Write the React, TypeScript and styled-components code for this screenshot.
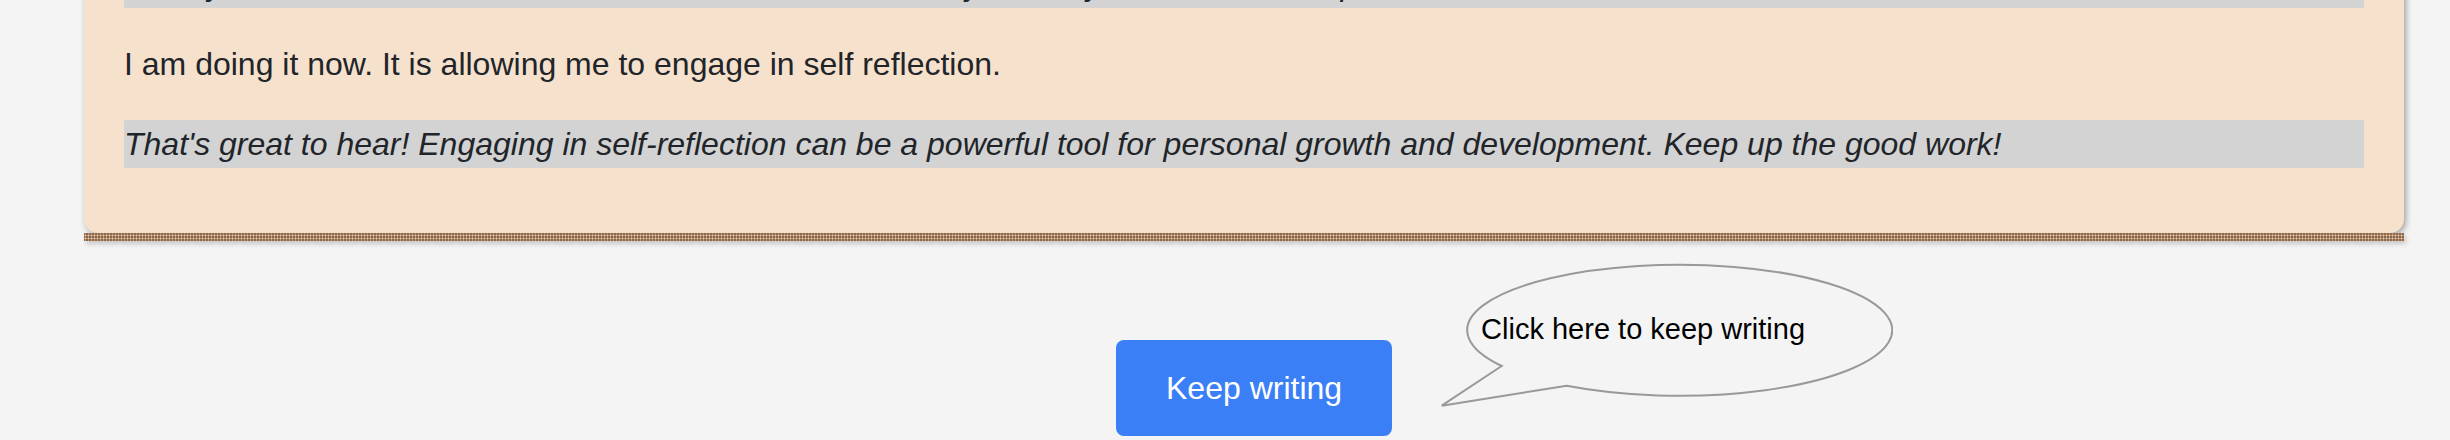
import React from "react";
import styled, { createGlobalStyle } from "styled-components";

const GlobalStyle = createGlobalStyle`
  html, body {
    margin: 0;
    padding: 0;
    overflow: hidden;
    background: #f4f4f4;
    font-family: "Liberation Sans", Arial, sans-serif;
  }
`;

const Page = styled.div`
  margin-top: -72px;
  display: flex;
  flex-direction: column;
`;

const Card = styled.section`
  margin-left: 84px;
  width: 2320px;
  display: flex;
  flex-direction: column;
`;

const CardBody = styled.div`
  background: #f6e1cd;
  padding: 32px 40px 65px;
  border-radius: 0 0 14px 14px;
  box-shadow: 2px 2px 6px rgba(0, 0, 0, 0.35);
  display: flex;
  flex-direction: column;
  gap: 32px;
`;

const Strip = styled.div`
  height: 8px;
  background-color: #8e6646;
  background-image: radial-gradient(circle, rgba(236, 216, 196, 0.9) 0.8px, transparent 1.2px);
  background-size: 3px 3px;
  background-position: 0 1px;
  box-shadow: 2px 3px 5px rgba(0, 0, 0, 0.18);
`;

const Message = styled.p<{ $bot?: boolean }>`
  margin: 0;
  font-size: 32px;
  line-height: 48px;
  color: #212529;
  font-style: ${(p) => (p.$bot ? "italic" : "normal")};
  background: ${(p) => (p.$bot ? "#d3d3d3" : "transparent")};
  white-space: nowrap;
  overflow: hidden;
`;

const ActionRow = styled.div`
  display: flex;
  align-items: flex-start;
  padding-left: 1116px;
  gap: 47px;
`;

const KeepButton = styled.button`
  margin-top: 99px;
  border: none;
  border-radius: 8px;
  background: #3b7ff6;
  color: #ffffff;
  font-family: "Liberation Sans", Arial, sans-serif;
  font-size: 32px;
  line-height: 48px;
  padding: 24px 50px;
  cursor: pointer;
`;

const BubbleWrap = styled.div`
  position: relative;
  margin-top: 19px;
  width: 454px;
  height: 150px;
`;

const BubbleLabel = styled.span`
  position: absolute;
  left: 42px;
  top: 53px;
  font-size: 29px;
  line-height: 33px;
  color: #000000;
  white-space: nowrap;
`;

function SpeechBubble() {
  return (
    <BubbleWrap>
      <svg width="454" height="150" viewBox="0 0 454 150">
        <path
          d="M 62.7 106 L 2.7 145.7 L 127.7 125.7 A 212.5 65.5 0 1 0 62.7 106 Z"
          fill="#f4f4f4"
          stroke="#999999"
          strokeWidth="2"
          strokeLinejoin="miter"
        />
      </svg>
      <BubbleLabel>Click here to keep writing</BubbleLabel>
    </BubbleWrap>
  );
}

export default function App() {
  return (
    <>
      <GlobalStyle />
      <Page>
        <Card>
          <CardBody>
            <Message $bot>
              Have you been able to set aside some time for reflection in your daily life, as it can help.
            </Message>
            <Message>I am doing it now. It is allowing me to engage in self reflection.</Message>
            <Message $bot>
              That's great to hear! Engaging in self-reflection can be a powerful tool for personal growth and development. Keep up the good work!
            </Message>
          </CardBody>
          <Strip />
        </Card>
        <ActionRow>
          <KeepButton>Keep writing</KeepButton>
          <SpeechBubble />
        </ActionRow>
      </Page>
    </>
  );
}
